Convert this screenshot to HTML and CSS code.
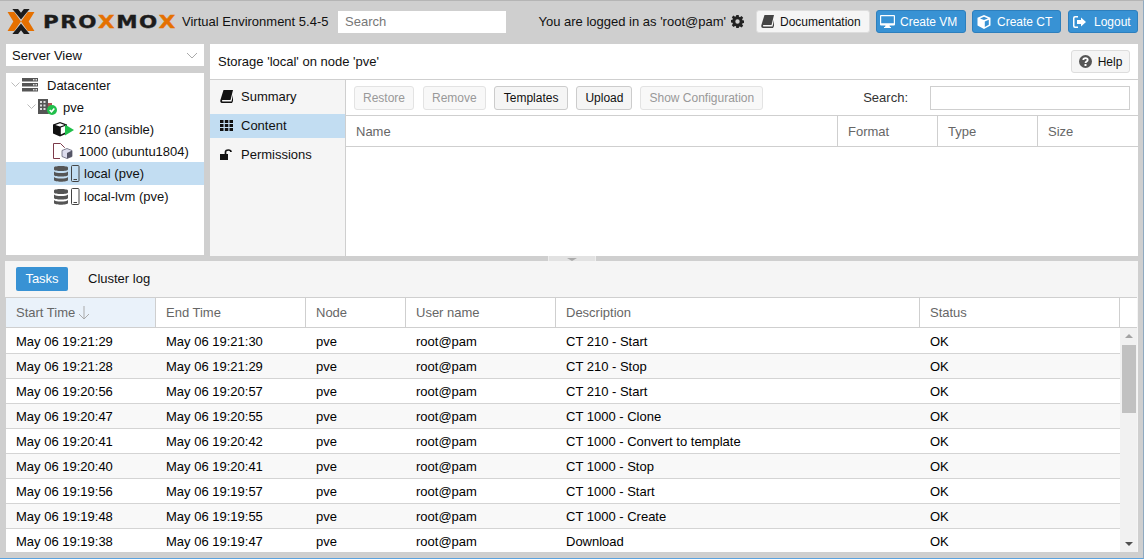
FILE: index.html
```html
<!DOCTYPE html>
<html lang="en">
<head>
    <meta charset="UTF-8">
    <meta name="viewport" content="width=device-width, initial-scale=1.0">
    <title>Proxmox Virtual Environment</title>
    <link rel="stylesheet" href="styles.css">
</head>
<body>
    <div class="app">
        <header class="topbar">
            <div class="logo">
                <svg class="logo-mark" width="28" height="25" viewBox="0 0 28 26">
                    <polygon fill="#1c1c1c" points="5,0 11,0 14,4 17,0 23,0 14,11"/>
                    <polygon fill="#1c1c1c" points="14,15 23,26 17,26 14,22 11,26 5,26"/>
                    <polygon fill="#e57000" points="0,3 7,3 14,13 7,23 0,23 6,13"/>
                    <polygon fill="#e57000" points="28,3 21,3 14,13 21,23 28,23 22,13"/>
                </svg>
                <span class="logo-word">PRO<b>X</b>MO<b>X</b></span>
            </div>
            <span class="version">Virtual Environment 5.4-5</span>
            <input class="top-search" placeholder="Search">
            <span class="login">You are logged in as 'root@pam'</span>
            <svg class="gear" width="13" height="13" viewBox="0 0 13 13">
                <path fill="#222" fill-rule="evenodd" d="M5.300 0h2.400l.3 1.800 1 .4 1.500-1.100 1.700 1.700-1.100 1.500.4 1 1.800.3v2.400l-1.800.3-.4 1 1.100 1.500-1.700 1.700-1.500-1.100-1 .4-.3 1.800H5.300L5 11.300l-1-.4-1.500 1.100L.8 10.300l1.100-1.500-.4-1L-.3 7.500V5.100l1.800-.3.4-1L.8 2.300 2.500.6 4 1.700l1-.4zM6.500 4.300a2.200 2.200 0 1 0 0 4.400 2.200 2.200 0 0 0 0-4.400z"/>
            </svg>
            <button class="btn btn-doc">
                <svg width="13" height="13" viewBox="0 0 13 13"><path fill="#444" d="M3.500 0H13l-2.500 10H2.600c-.8 0-.9 1.500 0 1.500H11.500L13 5v6l-1 2H2C.5 13 0 11.500.4 10z"/></svg>
                Documentation
            </button>
            <button class="btn btn-blue btn-vm">
                <svg width="15" height="13" viewBox="0 0 15 13"><path fill="#fff" fill-rule="evenodd" d="M1 0h13a1 1 0 0 1 1 1v8.500a1 1 0 0 1-1 1H9.500l.5 1.500h1v1H4v-1h1l.5-1.500H1a1 1 0 0 1-1-1V1a1 1 0 0 1 1-1zM1.200 1.200v7h12.600v-7z"/></svg>
                Create VM
            </button>
            <button class="btn btn-blue btn-ct">
                <svg width="14" height="14" viewBox="0 0 13 14"><path fill="#fff" d="M6.500 0 13 2.800v7.700L6.500 14 0 10.500V2.800zM6.500 1.700 2.500 3.400l4 1.700 4-1.700zM7.300 6.500v5.400l4-2.200V4.800z"/></svg>
                Create CT
            </button>
            <button class="btn btn-blue btn-out">
                <svg width="13" height="12" viewBox="0 0 13 12"><path fill="#fff" d="M2 0h3v1.500H2.500c-.6 0-1 .4-1 1v7c0 .6.4 1 1 1H5V12H2a2 2 0 0 1-2-2V2a2 2 0 0 1 2-2zM8 1.500 13 6 8 10.500V8H4V4h4z"/></svg>
                Logout
            </button>
        </header>

        <div class="upper">
            <aside class="side">
                <div class="view-select">
                    <span>Server View</span>
                    <svg width="12" height="7" viewBox="0 0 12 7"><path fill="none" stroke="#aaa" d="M1 1l5 5 5-5"/></svg>
                </div>
                <ul class="tree">
                    <li class="tree-row depth-0">
                        <svg class="twisty" width="9" height="6" viewBox="0 0 9 6"><path fill="none" stroke="#bbb" d="M.5.5l4 4 4-4"/></svg>
                        <svg class="ico-dc" width="16" height="14" viewBox="0 0 16 14"><path fill="#555" d="M0 0h16v3.500H0zM0 5h16v3.500H0zM0 10h16v3.500H0z"/><path fill="#ddd" d="M11 1h1.500v1.500H11zM13.500 1H15v1.500h-1.500zM11 6h1.500v1.500H11zM13.500 6H15v1.500h-1.500zM11 11h1.500v1.500H11zM13.500 11H15v1.500h-1.500z"/></svg>
                        <span>Datacenter</span>
                    </li>
                    <li class="tree-row depth-1">
                        <svg class="twisty" width="9" height="6" viewBox="0 0 9 6"><path fill="none" stroke="#bbb" d="M.5.5l4 4 4-4"/></svg>
                        <svg class="ico-node" width="20" height="16" viewBox="0 0 20 16">
                            <path fill="#555" d="M0 0h10v15H0z"/>
                            <path fill="#a55" d="M10 4h4v11h-4z"/>
                            <path fill="#ddd" d="M2 2h2v2H2zM5.500 2h2v2h-2zM2 5.500h2v2H2zM5.500 5.500h2v2h-2zM2 9h2v2H2zM5.500 9h2v2h-2z"/>
                            <circle cx="14" cy="11" r="5" fill="#21bf4b"/>
                            <path fill="none" stroke="#fff" stroke-width="1.600" d="M11.700 11l1.800 1.800 2.800-3.300"/>
                        </svg>
                        <span>pve</span>
                    </li>
                    <li class="tree-row depth-2">
                        <svg class="ico-ct" width="21" height="16" viewBox="0 0 21 16">
                            <path fill="#111" d="M7 1l7 2.500v9L7 15.500 0 12.500v-9z"/>
                            <path fill="#fff" d="M7 2.300l4.600 1.700L7 5.500 2.400 4z"/>
                            <path fill="#fff" d="M7.800 6.400l4.200-1.500v6.700L7.800 13.500z"/>
                            <path fill="#21bf4b" d="M12 3.500 21 9l-9 5.500z"/>
                        </svg>
                        <span>210 (ansible)</span>
                    </li>
                    <li class="tree-row depth-2">
                        <svg class="ico-ct" width="21" height="16" viewBox="0 0 21 16">
                            <path fill="none" stroke="#7d3a4a" d="M.5.500h7l4 4v11H.5z"/>
                            <path fill="#fff" d="M7 5h14v11H7z"/>
                            <path fill="#dde" stroke="#667" stroke-width=".8" d="M14 5.500l5 2v6l-5 2-5-2v-6z"/>
                            <path fill="#556" d="M14 10l5-2.500v6l-5 2z"/>
                        </svg>
                        <span>1000 (ubuntu1804)</span>
                    </li>
                    <li class="tree-row tree-tall tree-sel depth-2">
                        <svg class="ico-st" width="26" height="17" viewBox="0 0 26 17">
                            <path fill="#555" d="M0 2.500C0 .5 14 .5 14 2.500v2C14 6.500 0 6.500 0 4.500zM0 6.500c2 2 12 2 14 0v3.500c0 2-14 2-14 0zM0 12c2 2 12 2 14 0v3c0 2.300-14 2.300-14 0z"/>
                            <rect x="17.500" y=".5" width="7.500" height="16" rx="1" fill="none" stroke="#444"/>
                            <path stroke="#444" d="M19.500 14.500h3.500"/>
                        </svg>
                        <span>local (pve)</span>
                    </li>
                    <li class="tree-row tree-tall depth-2">
                        <svg class="ico-st" width="26" height="17" viewBox="0 0 26 17">
                            <path fill="#555" d="M0 2.500C0 .5 14 .5 14 2.500v2C14 6.500 0 6.500 0 4.500zM0 6.500c2 2 12 2 14 0v3.500c0 2-14 2-14 0zM0 12c2 2 12 2 14 0v3c0 2.300-14 2.300-14 0z"/>
                            <rect x="17.500" y=".5" width="7.500" height="16" rx="1" fill="none" stroke="#444"/>
                            <path stroke="#444" d="M19.500 14.500h3.500"/>
                        </svg>
                        <span>local-lvm (pve)</span>
                    </li>
                </ul>
            </aside>

            <main class="storage">
                <div class="storage-title">
                    <span>Storage 'local' on node 'pve'</span>
                    <button class="btn btn-help">
                        <svg width="13" height="13" viewBox="0 0 13 13"><circle cx="6.500" cy="6.500" r="6.500" fill="#555"/><path fill="none" stroke="#fff" stroke-width="1.800" d="M4.300 5c0-2.600 4.400-2.600 4.400 0 0 1.600-2.200 1.500-2.200 3"/><path fill="#fff" d="M5.500 9h2v2h-2z"/></svg>
                        Help
                    </button>
                </div>
                <div class="storage-body">
                    <nav class="subnav">
                        <div class="subnav-item">
                            <svg width="13" height="13" viewBox="0 0 13 13"><path fill="#111" d="M3.500 0H13l-2.500 10H2.600c-.8 0-.9 1.500 0 1.500H11.500L13 5v6l-1 2H2C.5 13 0 11.500.4 10z"/></svg>
                            Summary
                        </div>
                        <div class="subnav-item subnav-sel">
                            <svg width="13" height="11" viewBox="0 0 13 11"><path fill="#111" d="M0 0h3.500v3H0zM4.800 0h3.500v3H4.800zM9.500 0H13v3H9.500zM0 4h3.500v3H0zM4.800 4h3.500v3H4.800zM9.500 4H13v3H9.500zM0 8h3.500v3H0zM4.800 8h3.500v3H4.800zM9.500 8H13v3H9.500z"/></svg>
                            Content
                        </div>
                        <div class="subnav-item">
                            <svg width="13" height="11" viewBox="0 0 13 11"><path fill="#111" d="M0 5h8v6H0z"/><path fill="none" stroke="#111" stroke-width="1.700" d="M5.500 5V3c0-2.700 5.500-2.700 5.500 0"/></svg>
                            Permissions
                        </div>
                    </nav>
                    <section class="content">
                        <div class="toolbar">
                            <button class="btn tool off tool-first">Restore</button>
                            <button class="btn tool off">Remove</button>
                            <button class="btn tool tool-wide">Templates</button>
                            <button class="btn tool">Upload</button>
                            <button class="btn tool off">Show Configuration</button>
                            <label class="tool-label">Search:</label>
                            <input class="tool-search">
                        </div>
                        <div class="content-head">
                            <div>Name</div>
                            <div>Format</div>
                            <div>Type</div>
                            <div>Size</div>
                        </div>
                    </section>
                </div>
            </main>
        </div>

        <div class="splitter"><div class="split-handle"><i></i></div></div>

        <section class="tasks">
            <div class="tabs">
                <span class="tab tab-on">Tasks</span>
                <span class="tab">Cluster log</span>
            </div>
            <div class="row-head">
                <div class="sorted">Start Time
                    <svg width="12" height="14" viewBox="0 0 12 14"><path fill="none" stroke="#aaa" d="M6 0v13M1 8l5 5 5-5"/></svg>
                </div>
                <div>End Time</div>
                <div>Node</div>
                <div>User name</div>
                <div>Description</div>
                <div>Status</div>
                <div></div>
            </div>
            <div class="task-body">
                <div class="task-rows">
                    <div class="row"><div>May 06 19:21:29</div><div>May 06 19:21:30</div><div>pve</div><div>root@pam</div><div>CT 210 - Start</div><div>OK</div></div>
                    <div class="row"><div>May 06 19:21:28</div><div>May 06 19:21:29</div><div>pve</div><div>root@pam</div><div>CT 210 - Stop</div><div>OK</div></div>
                    <div class="row"><div>May 06 19:20:56</div><div>May 06 19:20:57</div><div>pve</div><div>root@pam</div><div>CT 210 - Start</div><div>OK</div></div>
                    <div class="row"><div>May 06 19:20:47</div><div>May 06 19:20:55</div><div>pve</div><div>root@pam</div><div>CT 1000 - Clone</div><div>OK</div></div>
                    <div class="row"><div>May 06 19:20:41</div><div>May 06 19:20:42</div><div>pve</div><div>root@pam</div><div>CT 1000 - Convert to template</div><div>OK</div></div>
                    <div class="row"><div>May 06 19:20:40</div><div>May 06 19:20:41</div><div>pve</div><div>root@pam</div><div>CT 1000 - Stop</div><div>OK</div></div>
                    <div class="row"><div>May 06 19:19:56</div><div>May 06 19:19:57</div><div>pve</div><div>root@pam</div><div>CT 1000 - Start</div><div>OK</div></div>
                    <div class="row"><div>May 06 19:19:48</div><div>May 06 19:19:55</div><div>pve</div><div>root@pam</div><div>CT 1000 - Create</div><div>OK</div></div>
                    <div class="row"><div>May 06 19:19:38</div><div>May 06 19:19:47</div><div>pve</div><div>root@pam</div><div>Download</div><div>OK</div></div>
                </div>
                <div class="scrollbar">
                    <i class="arrow-up"></i>
                    <div class="thumb"></div>
                    <i class="arrow-down"></i>
                </div>
            </div>
        </section>
    </div>
</body>
</html>
```

FILE: styles.css
```css
* {
    margin: 0;
    padding: 0;
    box-sizing: border-box;
    font-family: 'Liberation Sans', Arial, sans-serif;
}

html, body {
    height: 100%;
    overflow: hidden;
}

body {
    background: #cfcfcf;
    color: #111;
    font-size: 13px;
}

.app {
    height: 559px;
    display: flex;
    flex-direction: column;
    border-top: 1px solid #b5b5b5;
    border-right: 1px solid #8fa9c0;
    border-bottom: 1px solid #5ba3e0;
    padding-bottom: 6px;
}

/* top bar */
.topbar {
    height: 43px;
    flex: none;
    display: flex;
    align-items: center;
    padding: 0 5px 2px 7px;
}

.logo {
    display: flex;
    align-items: center;
    width: 175px;
    flex: none;
}

.logo-word {
    display: inline-block;
    font-family: 'DejaVu Sans', sans-serif;
    font-weight: 700;
    font-size: 18px;
    letter-spacing: 1.3px;
    color: #1c1c1c;
    margin-left: 8px;
    transform: scaleX(1.19);
    transform-origin: left center;
    -webkit-text-stroke: 0.4px #1c1c1c;
}

.logo-word b {
    font-family: inherit;
    color: #e57000;
    -webkit-text-stroke: 0.4px #e57000;
}

.version {
    width: 156px;
    flex: none;
    white-space: nowrap;
}

.top-search {
    width: 168px;
    height: 22px;
    border: 0;
    padding: 0 7px;
    font-size: 13px;
    background: #fff;
}

.top-search::placeholder {
    color: #777;
}

.login {
    margin-left: auto;
    white-space: nowrap;
}

.gear {
    margin: 0 12px 0 5px;
    flex: none;
}

.btn {
    display: inline-flex;
    align-items: center;
    justify-content: center;
    gap: 6px;
    height: 23px;
    border: 1px solid #ddd;
    border-radius: 3px;
    background: #f5f5f5;
    color: #111;
    font-size: 12px;
    white-space: nowrap;
}

.btn-doc {
    width: 114px;
    margin-right: 6px;
    justify-content: flex-start;
    padding-left: 4px;
}

.btn-blue {
    background: #3892d4;
    border-color: #2d7fbd;
    color: #fff;
}

.btn-vm {
    width: 90px;
    margin-right: 6px;
    justify-content: flex-start;
    padding-left: 3px;
    gap: 5px;
}

.btn-ct {
    width: 89px;
    margin-right: 7px;
    justify-content: flex-start;
    padding-left: 4px;
    gap: 6px;
}

.btn-out {
    width: 70px;
    justify-content: flex-start;
    padding-left: 4px;
    gap: 8px;
}

/* upper area */
.upper {
    height: 212px;
    flex: none;
    display: flex;
    gap: 6px;
    padding-left: 6px;
}

.side {
    width: 198px;
    flex: none;
    display: flex;
    flex-direction: column;
    gap: 7px;
    padding-bottom: 1px;
}

.view-select {
    height: 22px;
    flex: none;
    background: #fff;
    display: flex;
    align-items: center;
    justify-content: space-between;
    padding: 0 6px;
}

.tree {
    flex: 1;
    background: #fff;
    list-style: none;
    padding-top: 1px;
}

.tree-row {
    height: 22px;
    display: flex;
    align-items: center;
}

.tree-tall {
    height: 23px;
}

.tree-sel {
    background: #c2ddf2;
}

.depth-0 {
    padding-left: 5px;
}

.depth-1 {
    padding-left: 21px;
}

.depth-2 {
    padding-left: 47px;
}

.ico-dc {
    margin: 0 9px 0 2px;
}

.ico-node {
    margin: 0 5px 0 2px;
}

.ico-ct {
    margin: 0 5px 0 0;
}

.ico-st {
    margin: 0 4px 0 1px;
}

.storage {
    flex: 1;
    display: flex;
    flex-direction: column;
    min-width: 0;
    margin-right: 5px;
    background: #fff;
}

.storage-title {
    height: 36px;
    flex: none;
    display: flex;
    align-items: center;
    justify-content: space-between;
    padding: 0 8px;
    border-bottom: 1px solid #cfcfcf;
}

.btn-help {
    width: 59px;
}

.storage-body {
    flex: 1;
    display: flex;
    min-height: 0;
}

.subnav {
    width: 136px;
    flex: none;
    background: #f5f5f5;
    border-right: 1px solid #cfcfcf;
    padding-top: 5px;
}

.subnav-item {
    height: 24px;
    margin-bottom: 5px;
    display: flex;
    align-items: center;
    gap: 8px;
    padding: 0 0 2px 10px;
}

.subnav-sel {
    background: #c2ddf2;
}

.content {
    flex: 1;
    min-width: 0;
}

.toolbar {
    height: 36px;
    display: flex;
    align-items: center;
    gap: 8px;
    padding: 0 8px;
    background: #fff;
    border-bottom: 1px solid #cfcfcf;
}

.tool {
    height: 24px;
    padding: 0 8px;
    border-color: #ccc;
}

.tool-first {
    margin-right: 1px;
}

.tool-wide {
    padding: 0 9px;
}

.tool.off {
    color: #999;
    border-color: #e3e3e3;
    background: #f8f8f8;
}

.tool-label {
    margin-left: auto;
    color: #333;
    margin-right: 14px;
}

.tool-search {
    width: 200px;
    height: 24px;
    border: 1px solid #cfcfcf;
    background: #fff;
}

.content-head {
    height: 31px;
    display: grid;
    grid-template-columns: 492px 100px 100px 1fr;
    border-bottom: 1px solid #cfcfcf;
    color: #666;
}

.content-head div {
    display: flex;
    align-items: center;
    padding-left: 10px;
    border-right: 1px solid #cfcfcf;
}

.content-head div:last-child {
    border-right: 0;
}

/* splitter */
.splitter {
    height: 5px;
    flex: none;
    display: flex;
    justify-content: center;
    padding-left: 1px;
}

.split-handle {
    width: 48px;
    background: #e2e2e2;
    border-left: 1px solid #eee;
    border-right: 1px solid #eee;
    display: flex;
    justify-content: center;
}

.split-handle i {
    width: 0;
    height: 0;
    margin-top: 2px;
    border: 5px solid transparent;
    border-top: 3px solid #aaa;
    border-bottom: 0;
}

/* task log */
.tasks {
    flex: 1;
    min-height: 0;
    margin: 0 5px;
    background: #f5f5f5;
    display: flex;
    flex-direction: column;
    overflow: hidden;
}

.tabs {
    height: 36px;
    flex: none;
    display: flex;
    align-items: center;
    gap: 10px;
    padding-left: 11px;
}

.tab {
    height: 24px;
    padding: 0 10px 1px;
    display: flex;
    align-items: center;
    border-radius: 2px;
}

.tab-on {
    width: 52px;
    justify-content: center;
    padding: 0 0 1px;
    background: #3892d4;
    color: #fff;
}

.row-head {
    height: 31px;
    flex: none;
    display: grid;
    grid-template-columns: 150px 150px 100px 150px 364px 200px 1fr;
    margin-right: 1px;
    background: #fff;
    border-top: 1px solid #cfcfcf;
    border-left: 1px solid #cfcfcf;
    border-bottom: 1px solid #cfcfcf;
    color: #666;
}

.row-head div {
    display: flex;
    align-items: center;
    gap: 3px;
    padding-left: 10px;
    border-right: 1px solid #cfcfcf;
}

.row-head div:last-child {
    border-right: 0;
}

.row-head .sorted {
    background: #eaf2fa;
}

.task-body {
    flex: 1;
    min-height: 0;
    display: flex;
    margin-right: 1px;
    background: #fff;
    border-left: 1px solid #cfcfcf;
}

.task-rows {
    width: 1114px;
    flex: none;
}

.row {
    height: 25px;
    display: grid;
    grid-template-columns: 150px 150px 100px 150px 364px 1fr;
    align-items: center;
    border-bottom: 1px solid #d4d4d4;
    color: #000;
}

.row:first-child {
    height: 26px;
    padding-top: 1px;
}

.row:nth-child(even) {
    background: #f8f8f8;
}

.row div {
    padding-left: 10px;
}

.scrollbar {
    width: 17px;
    background: #f1f1f1;
    display: flex;
    flex-direction: column;
    align-items: center;
    padding-top: 6px;
}

.thumb {
    width: 14px;
    height: 68px;
    margin-top: 7px;
    flex: none;
    background: #c1c1c1;
}

.arrow-up, .arrow-down {
    width: 0;
    height: 0;
    flex: none;
    border: 4px solid transparent;
}

.arrow-up {
    border-top: 0;
    border-bottom: 4px solid #a3a3a3;
}

.arrow-down {
    margin-top: 129px;
    border-bottom: 0;
    border-top: 4px solid #505050;
}
```
